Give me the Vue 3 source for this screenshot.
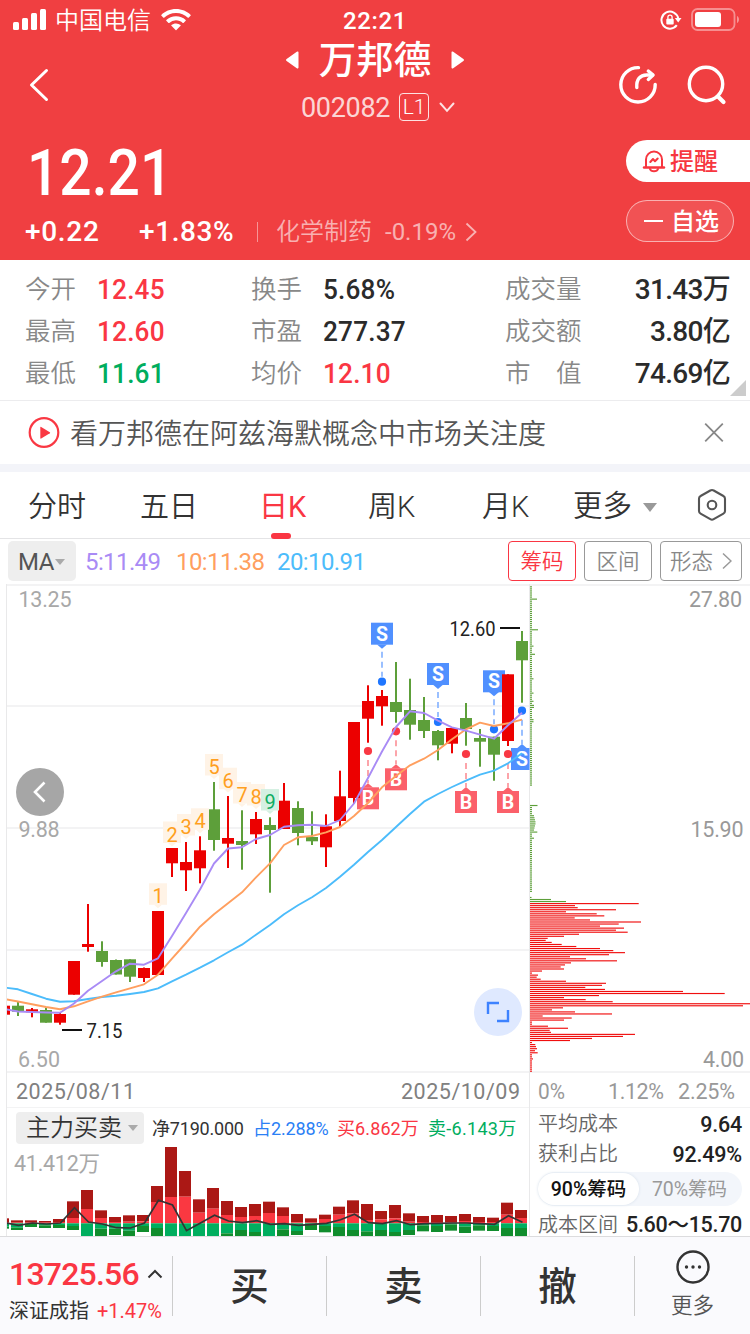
<script setup>
const x0 = 4
const step = 14

// [high, bodyTop, bodyBottom, low, up]
const rawCandles = [
  [1005.7, 1005.7, 1014.7, 1014.7, 1], [1001.7, 1005.7, 1011.7, 1016, 0], [1008, 1009.3, 1012.3, 1017.3, 1],
  [1007.7, 1010, 1022.7, 1022.7, 0], [1013, 1014, 1022.7, 1024.7, 1], [961, 961, 994.7, 994.7, 1],
  [904, 944, 947, 951.7, 1], [941.3, 951, 962, 966.7, 0], [959.5, 960, 974.5, 974.5, 0],
  [959.3, 959.3, 976.7, 982, 0], [967.5, 968, 978, 982, 1], [911, 911, 975, 975, 1],
  [848, 848, 863.3, 877, 1], [842, 862, 870.3, 891, 1], [836.3, 850.3, 868.3, 883.3, 1],
  [782, 809.3, 840, 850.7, 0], [796, 838, 843.7, 868, 1], [810.3, 841, 845, 869.7, 0],
  [812, 819, 834.3, 844, 1], [817.3, 825, 830, 892.7, 0], [783, 800.7, 829, 829, 1],
  [801.3, 808, 833, 845.3, 0], [811.3, 837, 841.3, 845, 0], [814.3, 826.3, 847.3, 867, 1],
  [770.7, 796.3, 821, 826.7, 1], [722, 722, 798, 804, 1], [685.3, 701, 718.7, 742.7, 1],
  [690, 696, 706.3, 725.7, 1], [662, 702, 712, 722.7, 0], [678.7, 710, 724.7, 739.7, 0],
  [697, 720, 731, 738, 0], [730, 731, 745.3, 760.3, 0], [728, 728, 743.7, 753.3, 1],
  [703, 718, 729, 745.7, 0], [729, 738, 741.7, 766.7, 0], [736.7, 736.7, 754.7, 780.7, 0],
  [674.3, 674.3, 741, 746, 1], [631, 641, 660.3, 702.7, 0],
]
const candles = rawCandles.map(([h, t, b, l, up], i) => ({ x: x0 + i * step, h, t, b, l, up }))

const toLine = (ys, dx = 0) => ys.map((y, i) => `${x0 + dx + i * step},${y}`).join(' ')
const ma5 = toLine([1009, 1011.5, 1012, 1012.5, 1012.7, 1003.5, 990.7, 981, 971.3, 963.7, 964.7, 958.3, 936, 913, 889.5, 863.5, 848.5, 847.3, 839, 835, 826.7, 825.3, 824.7, 826, 820, 803.5, 778, 751.5, 727, 711.3, 713, 720.7, 727.3, 730.7, 734.7, 738.7, 725.3, 712.7])
const ma10 = toLine([999, 1001.5, 1004.3, 1007, 1009.3, 1006.3, 1001.3, 996.7, 992.3, 988.3, 984.3, 974.7, 958.7, 943, 926.7, 914.3, 903.3, 892.3, 877.3, 863.3, 845, 837.3, 836, 832.3, 827, 816, 803, 787.3, 776, 765.3, 758.7, 750, 739.3, 729.3, 722.7, 726, 723.3, 719.7])
const ma20 = toLine([987.5, 989.3, 994, 998.7, 1001.7, 1001.3, 999, 997, 995.7, 994, 992, 988.3, 981.3, 974.7, 967.7, 960.3, 952.3, 944.7, 934.7, 925, 914.3, 905.3, 897.3, 888, 876.7, 864.7, 852, 840, 827, 814, 801.7, 794, 787, 780.7, 774.7, 770.7, 763.3, 753.3])

const counts = [[1, 158, 903.3], [2, 172, 841.5], [3, 186, 834], [4, 200, 828.3], [5, 214, 774], [6, 228, 787.7], [7, 242, 802], [8, 256, 804], [9, 270, 809]]

// trade markers: x, box top, dot centre, box below the dot
const trades = [
  { k: 'S', x: 382, box: 622.7, dot: 681.7, below: false },
  { k: 'S', x: 438, box: 663, dot: 722, below: false },
  { k: 'S', x: 494, box: 670.3, dot: 729.3, below: false },
  { k: 'S', x: 522, box: 748, dot: 710.7, below: true },
  { k: 'B', x: 368, box: 787.3, dot: 751, below: true },
  { k: 'B', x: 396, box: 768.3, dot: 731.3, below: true },
  { k: 'B', x: 466, box: 791, dot: 754, below: true },
  { k: 'B', x: 508, box: 791, dot: 754, below: true },
]
const pointer = (t) => t.below
  ? `M${t.x - 5} ${t.box + 0.3}L${t.x} ${t.box - 4}L${t.x + 5} ${t.box + 0.3}Z`
  : `M${t.x - 5} ${t.box + 21.7}L${t.x} ${t.box + 26}L${t.x + 5} ${t.box + 21.7}Z`

// cost distribution
const chipPitch = 2.0435
const chipTop = 896.9
const lossWidths = [1.5, 21, 36]
const gainWidths = [108.7, 45, 47.7, 86, 36, 66.7, 74.3, 44.7, 60, 111, 88.7, 70, 94, 86, 97.7, 49, 34, 17.7, 15.7, 21.7, 31.7, 46.3, 70, 83.3, 95, 79, 40, 56, 87, 41, 35, 30.7, 34, 12, 2, 8, 6.7, 10.7, 36, 76, 72, 55.3, 75, 153, 194.7, 69, 34, 55.7, 82.7, 220, 213, 33, 22, 45, 82, 12.7, 41.7, 34, 2, 2, 18, 38, 19.7, 21, 105, 93, 62, 40, 2, 5.3, 6, 7, 5, 7.7, 2, 2, 3, 2, 2, 2, 2, 2, 2]
const chips = []
lossWidths.forEach((w, i) => chips.push({ y: chipTop + i * chipPitch, w, up: 0 }))
gainWidths.forEach((w, i) => chips.push({ y: chipTop + (i + 3) * chipPitch, w, up: 1 }))
const spikes = [[599, 7], [629.7, 8], [645, 3.5], [654.5, 5], [679, 3.5], [693, 3.5], [701.5, 3.5], [705.5, 4], [707.5, 4], [719.5, 3.5], [722, 3.5], [805, 7.5], [815, 4], [817, 4.5], [819, 5], [821, 5.5], [823, 5.5], [825, 5], [827, 4.5], [829, 4], [832, 7.3], [838, 4]]
for (let i = -152; i < -2; i++) {
  const y = chipTop + i * chipPitch
  if (y > 786 && y < 804) continue
  const s = spikes.find((p) => Math.abs(p[0] - y) < 1.03)
  chips.push({ y, w: s ? s[1] : 2, up: 0 })
}

// volume by order side: [bigBuyTop, buyTop, sellBottom, bigSellBottom]
const base = 1223.3
const a = (arr, o) => arr.map((r) => r.map((v) => o + v / 3))
const volumes = [
  ...a([[535, 548, 560, 566], [541, 548, 563, 570], [541, 548, 551, 561], [543, 548, 556, 564], [537, 546, 555, 564], [484, 534, 558, 570], [450, 507, 588, 588], [511, 534, 566, 588], [531, 546, 566, 585], [526, 545, 572, 588], [525, 544, 558, 576], [438, 486, 564, 588], [321, 471, 588, 588], [393, 470, 588, 588], [478, 518, 588, 588], [444, 506, 588, 588], [483, 525, 580, 588], [501, 531, 570, 588], [492, 528, 576, 588]], 1040),
  ...a([[395, 429, 498, 498], [412, 438, 478, 498], [432, 457, 483, 495], [445, 458, 464, 480], [434, 447, 468, 487], [410, 434, 471, 498], [391, 430, 480, 498], [402, 450, 484, 498], [423, 448, 480, 498], [405, 445, 486, 498], [430, 455, 480, 495], [438, 456, 466, 484], [435, 456, 468, 486], [438, 457, 463, 482], [432, 453, 470, 489], [441, 456, 466, 482], [443, 456, 468, 483], [398, 434, 474, 498], [420, 444, 474, 498]], 1070),
].map(([bt, t, b, bb], i) => ({ x: x0 - 7 + i * step, bt, t, b, bb }))
const netLine = toLine([1222.7, 1225.3, 1223, 1224, 1223, 1207.7, 1222, 1224, 1227.7, 1228, 1223, 1200.3, 1205, 1230.7, 1223, 1215.3, 1221, 1222.7, 1220.7, 1224.3, 1223.7, 1225.3, 1224.3, 1223.3, 1219.7, 1214.3, 1222.7, 1223.7, 1220.7, 1224.7, 1223.7, 1223.3, 1223, 1223, 1223.7, 1224.3, 1215.7, 1222.3], 0.5)

const stats = [
  [['今开', '12.45', 'up'], ['换手', '5.68%', ''], ['成交量', '31.43万', '']],
  [['最高', '12.60', 'up'], ['市盈', '277.37', ''], ['成交额', '3.80亿', '']],
  [['最低', '11.61', 'down'], ['均价', '12.10', 'up'], ['市　值', '74.69亿', '']],
]
</script>

<template>
  <div class="app">
    <header class="head">
      <div class="status">
        <svg class="signal" width="34" height="22" viewBox="0 0 34 22" fill="#fff">
          <rect x="0" y="13" width="6" height="8" rx="1.5" /><rect x="9" y="9" width="6" height="12" rx="1.5" />
          <rect x="18" y="4" width="6" height="17" rx="1.5" /><rect x="27" y="0" width="6" height="21" rx="1.5" />
        </svg>
        <span class="carrier">中国电信</span>
        <svg class="wifi" width="30" height="22" viewBox="0 0 30 22" fill="#fff">
          <path d="M15 0C9.200 0 4 2.200 .3 5.900a.5.5 0 0 0 0 .7L2.400 8.700a.5.5 0 0 0 .7 0A17 17 0 0 1 15 4a17 17 0 0 1 11.900 4.700.5.5 0 0 0 .7 0l2.100-2.100a.5.5 0 0 0 0-.7C26 2.200 20.800 0 15 0z" />
          <path d="M15 7.300c-3.800 0-7.200 1.400-9.700 3.700a.5.5 0 0 0 0 .7l2.200 2.200a.5.5 0 0 0 .7 0A10 10 0 0 1 15 11.300c2.600 0 5 1 6.800 2.600a.5.5 0 0 0 .7 0l2.200-2.200a.5.5 0 0 0 0-.7A14.300 14.300 0 0 0 15 7.300z" />
          <path d="M15 14.400c-1.800 0-3.400.6-4.600 1.700a.5.5 0 0 0 0 .7l4.200 4.200a.6.6 0 0 0 .8 0l4.200-4.200a.5.5 0 0 0 0-.7A6.900 6.900 0 0 0 15 14.400z" />
        </svg>
        <span class="clock">22:21</span>
        <svg class="lock" width="22" height="20" viewBox="0 0 22 20" fill="none" stroke="#fff" stroke-width="2">
          <path d="M16.800 15.200A8.500 8.500 0 1 1 18.300 8.500" />
          <path d="M14.800 8h6.700l-3.300 4.600z" fill="#fff" stroke="none" />
          <rect x="6.300" y="8.700" width="7.400" height="5.800" rx="1" fill="#fff" stroke="none" />
          <path d="M7.900 9V7.200a2.100 2.100 0 0 1 4.200 0V9" stroke-width="1.300" />
        </svg>
        <svg class="battery" width="49" height="23" viewBox="0 0 49 23">
          <rect x="1" y="1" width="42.500" height="21" rx="5.500" fill="none" stroke="#fff" stroke-opacity=".42" stroke-width="1.800" />
          <rect x="4" y="4" width="26" height="15" rx="3" fill="#fff" />
          <path d="M46 8v7c1.400-.6 2-2 2-3.500S47.400 8.600 46 8z" fill="#fff" fill-opacity=".45" />
        </svg>
      </div>

      <nav class="nav">
        <svg class="back" width="24" height="36" viewBox="0 0 24 36" fill="none" stroke="#fff" stroke-width="3" stroke-linecap="round" stroke-linejoin="round"><path d="M19.500 3.500L4.500 18l15 14.500" /></svg>
        <div class="title-col">
          <div class="title-row">
            <svg width="13" height="18" viewBox="0 0 13 18" fill="#fff"><path d="M12.500 1.600v14.800a1 1 0 0 1-1.700.8L.6 10a1.300 1.300 0 0 1 0-2L10.800.8a1 1 0 0 1 1.700.8z" /></svg>
            <h1>万邦德</h1>
            <svg width="13" height="18" viewBox="0 0 13 18" fill="#fff"><path d="M.5 1.600v14.800a1 1 0 0 0 1.700.8L12.400 10a1.300 1.300 0 0 0 0-2L2.200.8a1 1 0 0 0-1.700.8z" /></svg>
          </div>
          <div class="code-row">
            <span class="code">002082</span>
            <span class="level">L1</span>
            <svg width="16" height="11" viewBox="0 0 16 11" fill="none" stroke="#fff" stroke-opacity=".85" stroke-width="2" stroke-linecap="round"><path d="M1.500 1.500L8 8.800l6.500-7.300" /></svg>
          </div>
        </div>
        <div class="nav-icons">
          <svg width="40" height="40" viewBox="0 0 40 40" fill="none" stroke="#fff" stroke-width="3.400" stroke-linecap="round" stroke-linejoin="round">
            <path d="M20.500 2.600A17.200 17.200 0 1 0 37.200 19.500" /><path d="M18.800 22.500c-.6-8.200 3.500-12.500 9.700-12.500h6" /><path d="M30.300 6l4.800 4-4.800 4.400" />
          </svg>
          <svg width="40" height="40" viewBox="0 0 40 40" fill="none" stroke="#fff" stroke-width="3.400" stroke-linecap="round">
            <circle cx="19" cy="19" r="16.700" /><path d="M31.200 31.800l5.300 5.200" stroke-width="4.200" />
          </svg>
        </div>
      </nav>

      <div class="quote">
        <div class="quote-left">
          <div class="price"><span>12.21</span></div>
          <div class="change">
            <span class="chg">+0.22</span>
            <span class="pct">+1.83%</span>
            <i class="bar"></i>
            <span class="sector">化学制药</span>
            <span class="sector-pct">-0.19%</span>
            <svg width="12" height="20" viewBox="0 0 12 20" fill="none" stroke="#fff" stroke-opacity=".6" stroke-width="1.800"><path d="M1.500 1.500L10.500 10l-9 8.500" /></svg>
          </div>
        </div>
        <div class="quote-right">
          <div class="alert">
            <svg width="24" height="26" viewBox="0 0 24 26" fill="none" stroke="#f7363f" stroke-width="2" stroke-linejoin="round" stroke-linecap="round">
              <path d="M2 19.500h20" stroke-width="2.400" /><path d="M4 19v-7.500a8 8 0 0 1 16 0V19" /><path d="M8 21c1 3 7 3 8 0" /><path d="M8.300 14l2.700-3 2 2.300 2.700-2.800" />
            </svg>
            <span>提醒</span>
          </div>
          <div class="watch"><i></i><span>自选</span></div>
        </div>
      </div>
    </header>

    <section class="stats">
      <div v-for="(row, i) in stats" :key="i" class="stat-row">
        <template v-for="c in row" :key="c[0]">
          <span class="label">{{ c[0] }}</span><span class="value" :class="c[2]">{{ c[1] }}</span>
        </template>
      </div>
      <i class="corner"></i>
    </section>

    <section class="news">
      <svg width="32" height="32" viewBox="0 0 32 32" fill="none"><circle cx="16" cy="15.500" r="14.300" stroke="#f93843" stroke-width="2.200" /><path d="M12.300 10.500V21a.6.6 0 0 0 .9.5l8.600-5.200a.6.6 0 0 0 0-1L13.200 10a.6.6 0 0 0-.9.500z" fill="#f93843" /></svg>
      <p>看万邦德在阿兹海默概念中市场关注度</p>
      <svg width="20" height="20" viewBox="0 0 20 20" stroke="#888" stroke-width="1.800"><path d="M1.200 .7l17.600 17.600M18.800 .7L1.200 18.300" /></svg>
    </section>

    <section class="tabs">
      <span>分时</span><span>五日</span><span class="active">日K</span><span>周K</span><span>月K</span>
      <span class="more">更多<i></i></span>
      <svg width="32" height="34" viewBox="0 0 32 34" fill="none" stroke="#555" stroke-width="2.100"><path d="M14.300 2.500a3.400 3.400 0 0 1 3.400 0l9.700 5.500a3 3 0 0 1 1.600 2.700v12.200a3 3 0 0 1-1.600 2.700l-9.700 5.600a3.400 3.400 0 0 1-3.400 0L4.600 25.600A3 3 0 0 1 3 22.900V10.700A3 3 0 0 1 4.600 8z" /><circle cx="16" cy="17" r="4.300" /></svg>
    </section>

    <section class="ma-row">
      <span class="ma-pick">MA<i></i></span>
      <span class="m5">5:11.49</span><span class="m10">10:11.38</span><span class="m20">20:10.91</span>
      <span class="btn on">筹码</span><span class="btn">区间</span>
      <span class="btn wide">形态<svg width="10" height="18" viewBox="0 0 10 18" fill="none" stroke="#999" stroke-width="1.500"><path d="M1 1.500L9 9l-8 7.500" /></svg></span>
    </section>

    <svg class="kline" width="750" height="524" viewBox="0 584 750 524">
      <defs><clipPath id="plot"><rect x="7" y="584" width="522.500" height="524" /></clipPath></defs>
      <g fill="#f3f3f4">
        <rect x="6" y="584" width="744" height="2" /><rect x="6" y="705" width="524" height="2" />
        <rect x="6" y="827" width="524" height="2" /><rect x="6" y="949" width="524" height="2" />
        <rect x="6" y="1071" width="744" height="2" /><rect x="6" y="1107" width="744" height="1" />
      </g>
      <g fill="#e9e9ea"><rect x="6" y="584" width="1" height="524" /><rect x="529" y="584" width="1" height="524" /></g>

      <g clip-path="url(#plot)">
        <g v-for="t in trades" :key="t.k + t.x" :class="t.k === 'S' ? 'sell' : 'buy'">
          <line class="stem" :x1="t.x" :x2="t.x" :y1="t.below ? t.dot + 9 : t.box + 29" :y2="t.below ? t.box - 4 : t.dot - 5" />
          <path class="flag" :d="pointer(t)" /><rect class="flag" :x="t.x - 11" :y="t.box" width="22" height="22" />
          <text class="flag-text" :x="t.x" :y="t.box + 17.800">{{ t.k }}</text>
        </g>
        <g v-for="c in candles" :key="c.x" :fill="c.up ? '#ec0000' : '#5d9f3a'">
          <rect :x="c.x - 1" :y="c.h" width="2" :height="c.l - c.h" /><rect :x="c.x - 6" :y="c.t" width="12" :height="c.b - c.t" />
        </g>
        <circle v-for="t in trades" :key="'d' + t.x" :cx="t.x" :cy="t.dot" r="4.100" :fill="t.k === 'S' ? '#1f76ff' : '#f93843'" />
        <g fill="none" stroke-width="1.900" stroke-linejoin="round">
          <polyline :points="ma20" stroke="#4cbcfb" /><polyline :points="ma10" stroke="#ff9f5f" /><polyline :points="ma5" stroke="#a98bf5" />
        </g>
      </g>

      <g v-for="[n, x, y] in counts" :key="n" :fill="n === 9 ? '#d5f0e2' : '#fff3e6'">
        <rect :x="x - 9" :y="y - 20" width="18" height="21.500" /><path :d="`M${x - 4} ${y + 1.400}h8l-4 3.600z`" />
        <text class="count" :x="x" :y="y" :fill="n === 9 ? '#10ad64' : '#ff9f20'">{{ n }}</text>
      </g>

      <rect v-for="(c, i) in chips" :key="i" x="530" :y="c.y" :width="c.w" height="1.150" :fill="c.up ? '#f00f0f' : '#5d9f3a'" />

      <rect x="62" y="1029" width="20" height="2" fill="#111" /><rect x="500" y="627" width="20" height="2" fill="#111" />
      <text class="num dark" x="86.500" y="1037.500" textLength="36" lengthAdjust="spacingAndGlyphs">7.15</text>
      <text class="num dark" x="449.500" y="636" textLength="46" lengthAdjust="spacingAndGlyphs">12.60</text>

      <text class="num mid" x="18.500" y="607" textLength="53">13.25</text>
      <text class="num mid" x="18.500" y="837" textLength="41">9.88</text>
      <text class="num mid" x="18" y="1067" textLength="42">6.50</text>
      <text class="num axis" x="689" y="607" textLength="53">27.80</text>
      <text class="num axis" x="690.500" y="837" textLength="53">15.90</text>
      <text class="num axis" x="703" y="1067" textLength="41">4.00</text>
      <text class="num date" x="16" y="1099" textLength="119">2025/08/11</text>
      <text class="num date" x="401" y="1099" textLength="119">2025/10/09</text>
      <text class="num axis" x="538" y="1099" textLength="27" lengthAdjust="spacingAndGlyphs">0%</text>
      <text class="num axis" x="608" y="1099" textLength="56">1.12%</text>
      <text class="num axis" x="678" y="1099" textLength="57">2.25%</text>

      <circle cx="40" cy="792" r="24" fill="#a6a6a6" /><path d="M44.500 782.500L35 792l9.500 9.500" fill="none" stroke="#fff" stroke-width="2.600" />
      <circle cx="498" cy="1012" r="24" fill="#dfe9ff" /><path d="M488 1014v-11h11M497 1021h11v-11" fill="none" stroke="#3d82ff" stroke-width="2.400" />
    </svg>

    <section class="lower">
      <div class="force">
        <div class="force-head">
          <span class="force-pick">主力买卖<i></i></span>
          <span class="f-net">净7190.000</span><span class="f-pct">占2.288%</span><span class="f-buy">买6.862万</span><span class="f-sell">卖-6.143万</span>
        </div>
        <svg class="bars" width="522" height="91" viewBox="7 1145 522 91">
          <g v-for="v in volumes" :key="v.x">
            <rect :x="v.x" :y="v.bt" width="12" :height="v.t - v.bt" fill="#ab1815" />
            <rect :x="v.x" :y="v.t" width="12" :height="base - v.t" fill="#fa3841" />
            <rect :x="v.x" :y="base" width="12" :height="v.b - base" fill="#00ae5f" />
            <rect :x="v.x" :y="v.b" width="12" :height="v.bb - v.b" fill="#108d2d" />
          </g>
          <polyline :points="netLine" fill="none" stroke="#333" stroke-width="1.700" />
          <text class="num mid" x="14" y="1171" textLength="86">41.412万</text>
        </svg>
      </div>
      <div class="cost">
        <div class="cost-row"><span>平均成本</span><b>9.64</b></div>
        <div class="cost-row"><span>获利占比</span><b>92.49%</b></div>
        <div class="toggle"><span class="sel">90%筹码</span><span>70%筹码</span></div>
        <div class="cost-row last"><span>成本区间</span><b>5.60～15.70</b></div>
      </div>
    </section>

    <footer class="foot">
      <div class="index">
        <div class="index-top"><span>13725.56</span><svg width="16" height="10" viewBox="0 0 16 10" fill="none" stroke="#333" stroke-width="2"><path d="M1.500 8.500L8 2l6.500 6.500" /></svg></div>
        <div class="index-sub">深证成指<em>+1.47%</em></div>
      </div>
      <div class="act">买</div>
      <div class="act">卖</div>
      <div class="act">撤</div>
      <div class="more-act">
        <svg width="34" height="34" viewBox="0 0 34 34"><circle cx="17" cy="17" r="15.500" fill="none" stroke="#333" stroke-width="2.400" /><g fill="#333"><circle cx="10.500" cy="17" r="1.700" /><circle cx="17" cy="17" r="1.700" /><circle cx="23.500" cy="17" r="1.700" /></g></svg>
        <span>更多</span>
      </div>
    </footer>
  </div>
</template>

<style>
body { background: #fff; }
</style>

<style scoped>
.app { width: 750px; height: 1334px; overflow: hidden; background: #fff; color: #333; font-family: Roboto, "Noto Sans CJK SC", sans-serif; line-height: 1; white-space: nowrap; }
svg { display: block; flex: none; }
i, em { font-style: normal; }

.head { height: 260px; background: #f03f41; color: #fff; }
.status { display: flex; align-items: center; height: 40px; padding-left: 13px; }
.signal { margin-bottom: 1px; }
.carrier { width: 98px; margin-left: 8px; padding-top: 2px; font-size: 24px; font-weight: 350; }
.wifi { margin-left: 8px; }
.clock { width: 64px; margin-left: 152px; padding-top: 2px; font-size: 24px; font-weight: 500; letter-spacing: .6px; }
.lock { margin-left: 253px; }
.battery { margin-left: 9px; margin-bottom: 1px; }

.nav { display: flex; height: 94px; }
.back { margin: 27px 0 0 27px; }
.title-col { width: 200px; margin-left: 224px; }
.title-row { display: flex; align-items: center; justify-content: center; gap: 20px; height: 40px; }
h1 { margin: 0; padding-top: 2px; font-size: 37.500px; font-weight: 500; }
.code-row { display: flex; align-items: center; height: 54px; padding-left: 26px; }
.code { width: 90px; margin-right: 8px; padding-top: 2px; font-size: 27px; color: rgba(255, 255, 255, .8); letter-spacing: -.3px; }
.level { box-sizing: border-box; width: 30px; height: 28px; margin-right: 10px; border: 1.500px solid rgba(255, 255, 255, .85); border-radius: 4px; font-size: 21px; font-weight: 300; line-height: 26px; text-align: center; }
.nav-icons { display: flex; gap: 29px; margin: 25px 0 0 143px; }

.quote { display: flex; justify-content: space-between; height: 126px; }
.quote-left { padding-left: 25px; }
.price { height: 77px; padding-left: 2px; font-size: 64px; font-weight: 500; line-height: 79px; }
.price span { display: inline-block; transform: scaleX(.89); transform-origin: 0 50%; }
.change { display: flex; align-items: center; height: 42px; font-size: 28px; font-weight: 500; }
.chg { width: 114px; letter-spacing: .7px; }
.pct { width: 118px; letter-spacing: .6px; }
.bar { width: 1px; height: 20px; margin-right: 18px; background: rgba(255, 255, 255, .45); }
.sector { width: 109px; font-size: 24px; font-weight: 350; color: rgba(255, 255, 255, .6); }
.sector-pct { width: 80px; font-size: 24px; font-weight: 400; color: rgba(255, 255, 255, .6); }
.quote-right { width: 124px; padding-top: 6px; }
.alert { display: flex; align-items: center; gap: 4px; box-sizing: border-box; height: 42px; padding-left: 16px; border-radius: 21px 0 0 21px; background: #fff; color: #f7363f; font-size: 24px; font-weight: 500; }
.alert span, .watch span { padding-top: 1px; }
.watch { display: flex; align-items: center; gap: 8px; box-sizing: border-box; width: 108px; height: 42px; margin-top: 18px; padding-left: 17px; border: 1px solid rgba(255, 255, 255, .55); border-radius: 21px; background: rgba(255, 255, 255, .1); font-size: 24px; font-weight: 500; }
.watch i { width: 19px; height: 2px; background: #fff; }

.stats { position: relative; box-sizing: border-box; height: 141px; padding-top: 9px; border-bottom: 1px solid #ececee; }
.stat-row { display: grid; grid-template-columns: 72px 154px 72px 182px 103px 122px; align-items: center; height: 42px; padding-left: 25px; }
.label { font-size: 25.500px; font-weight: 350; color: #888; }
.value { font-size: 28px; font-weight: 500; color: #2b2b2b; letter-spacing: .2px; transform: scaleX(.935); transform-origin: 0 50%; }
.value:last-child { text-align: right; letter-spacing: -.7px; transform: none; }
.up { color: #fa3643; }
.down { color: #00ad5e; }
.corner { position: absolute; right: 4px; bottom: 4px; border-style: solid; border-width: 0 0 16px 16px; border-color: transparent transparent #ccc; }

.news { display: flex; align-items: center; height: 63px; padding: 0 26px 0 28px; border-bottom: 8px solid #f3f4f9; }
.news p { flex: 1; margin: 0 0 0 10px; padding-top: 4px; font-size: 28px; font-weight: 350; color: #555; }

.tabs { display: grid; grid-template-columns: 112px 119px 109px 114px 91px 123px 32px; align-items: center; box-sizing: border-box; height: 67px; padding-left: 28px; border-bottom: 1px solid #e4e4e6; font-size: 29px; font-weight: 350; color: #333; }
.tabs > span { position: relative; padding-top: 4px; }
.tabs .active { color: #fa3643; font-weight: 400; }
.tabs .active::after { content: ""; position: absolute; left: 12px; bottom: -17px; width: 20px; height: 6px; border-radius: 3px; background: #fa3643; }
.tabs .more { font-size: 29.500px; }
.more i { display: inline-block; margin: 0 0 4px 11px; border: 7px solid transparent; border-top: 9px solid #999; border-bottom: 0; }

.ma-row { display: flex; align-items: center; height: 45px; padding-left: 8px; font-size: 24px; }
.ma-row > * { margin-bottom: 1px; }
.ma-pick { display: flex; align-items: center; gap: 1px; box-sizing: border-box; width: 68px; height: 40px; padding: 2px 0 0 10px; border-radius: 5px; background: #eee; color: #555; font-size: 24px; letter-spacing: -.5px; }
.ma-pick i, .force-pick i { border: 5px solid transparent; border-top: 6px solid #aaa; border-bottom: 0; }
.m5, .m10, .m20 { padding-top: 2px; letter-spacing: -.6px; }
.m5 { width: 91px; margin-left: 9px; color: #a98bf5; }
.m10 { width: 101px; color: #ff9f5f; }
.m20 { width: 231px; color: #4cbcfb; }
.btn { box-sizing: border-box; width: 68px; height: 40px; margin-right: 8px; border: 1px solid #999; border-radius: 4px; color: #888; font-size: 21.500px; font-weight: 350; line-height: 39px; text-align: center; }
.btn.on { border-color: #fa3643; color: #fa3643; }
.btn.wide { display: flex; align-items: center; justify-content: center; gap: 9px; width: 82px; margin-right: 0; }

.num { font-size: 21.500px; }
.dark { fill: #222; font-size: 20px; }
.mid { fill: #a8a8a8; }
.axis { fill: #999; }
.date { fill: #808080; }
.count { font-size: 20px; text-anchor: middle; }
.sell .flag { fill: #5090ff; }
.buy .flag { fill: #fb606a; }
.flag-text { fill: #fff; font-size: 19.500px; font-weight: 700; text-anchor: middle; }
.stem { stroke-width: 1.800; stroke-dasharray: 6 4; }
.sell .stem { stroke: #8fb9ff; }
.buy .stem { stroke: #fc9ba1; }

.lower { display: flex; height: 128px; overflow: hidden; }
.force { width: 522px; margin-left: 6px; border-left: 1px solid #e9e9ea; }
.force-head { display: flex; align-items: center; height: 36px; margin-top: 1px; padding: 2px 0 0 9px; box-sizing: border-box; font-size: 18px; }
.force-head > span:not(.force-pick) { padding-top: 2px; }
.force-pick { display: flex; align-items: center; gap: 6px; box-sizing: border-box; width: 128px; height: 32px; margin-right: 8px; padding-left: 10px; border-radius: 4px; background: #eee; font-size: 24px; font-weight: 350; }
.f-net { width: 101px; letter-spacing: -.2px; }
.f-pct { width: 84px; color: #2b80f5; letter-spacing: -.1px; }
.f-buy { width: 91px; color: #fa3643; letter-spacing: .1px; }
.f-sell { color: #00ad5e; letter-spacing: .3px; }
.cost { box-sizing: border-box; width: 221px; padding: 1px 8px 0; border-left: 1px solid #e9e9ea; }
.cost-row { display: flex; align-items: center; justify-content: space-between; height: 30px; box-sizing: border-box; font-size: 20px; font-weight: 350; color: #666; }
.cost-row b { padding-top: 1px; font-size: 21.500px; font-weight: 500; color: #222; letter-spacing: -.2px; }
.cost-row.last { height: 26px; padding-top: 3px; line-height: 20px; }
.last b { padding-top: 0; letter-spacing: -.3px; line-height: 22px; }
.toggle { display: flex; align-items: center; height: 34px; margin: 3px 0 4px; border-radius: 17px; background: #f3f6fb; font-size: 19.500px; color: #999; }
.toggle span { width: 101px; padding-top: 2px; line-height: 30px; text-align: center; }
.toggle .sel { border-radius: 16px; background: #fff; box-shadow: 0 0 3px #d5dfea; color: #111; font-weight: 500; }

.foot { display: flex; align-items: center; box-sizing: border-box; height: 98px; border-top: 1px solid #dcdcde; background: #fafafd; }
.index { box-sizing: border-box; width: 172px; height: 96px; padding: 17px 0 0 9px; }
.index-top { display: flex; align-items: center; justify-content: space-between; height: 38px; padding-right: 9px; font-size: 32px; font-weight: 500; color: #fa3643; letter-spacing: -.8px; }
.index-sub { display: flex; justify-content: space-between; padding: 8px 10px 0 0; font-size: 20px; }
.index-sub em { color: #fa3643; }
.act { box-sizing: border-box; width: 154px; height: 60px; border-left: 1px solid #ccc; font-size: 38.500px; font-weight: 500; line-height: 61px; text-align: center; }
.more-act { display: flex; flex-direction: column; align-items: center; box-sizing: border-box; width: 116px; height: 60px; border-left: 1px solid #ccc; font-size: 21.500px; font-weight: 350; color: #555; }
.more-act svg { margin: -6px 0 11px; }
</style>
